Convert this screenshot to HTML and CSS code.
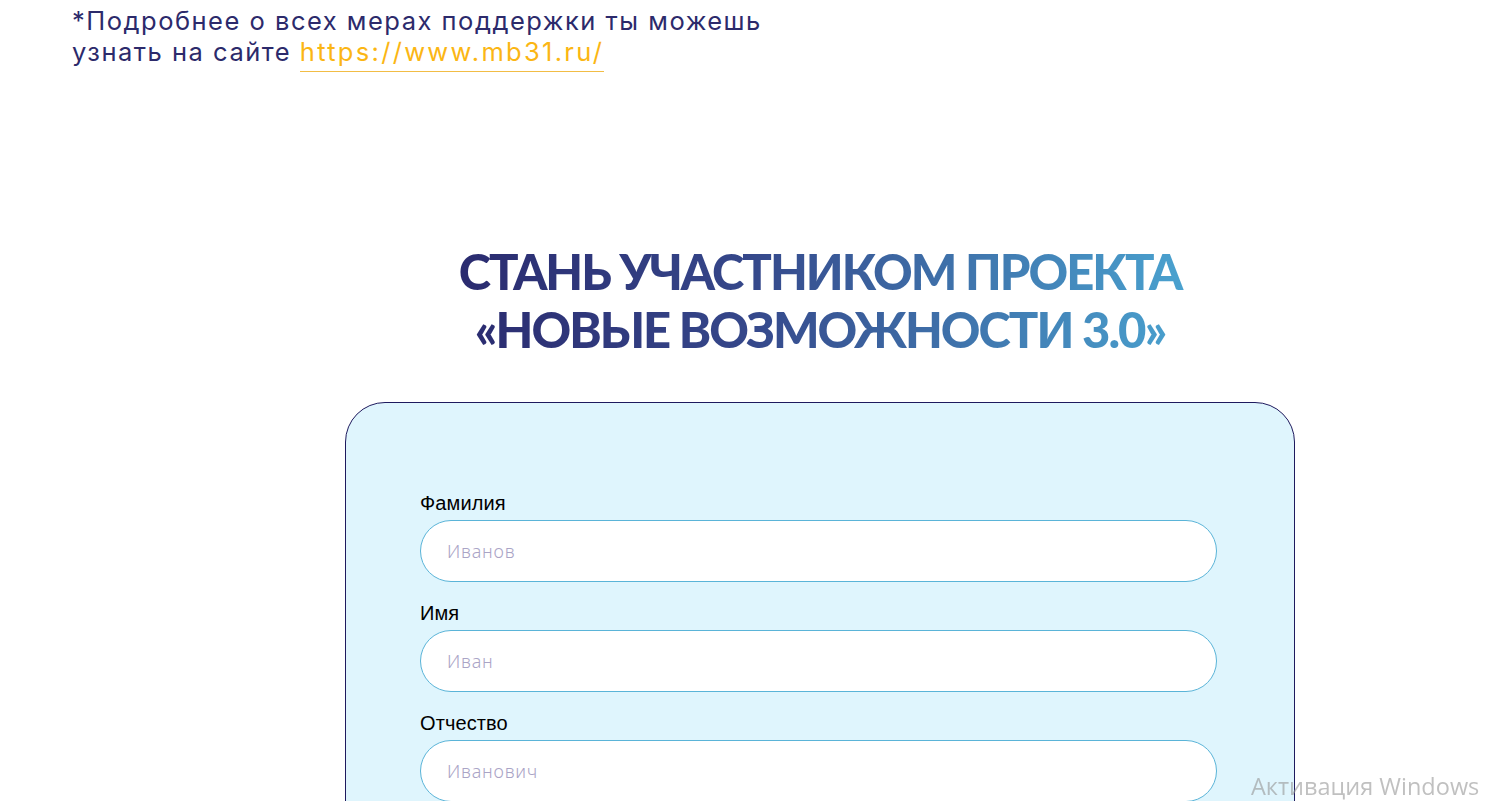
FILE: index.html
```html
<!DOCTYPE html>
<html lang="ru">
<head>
<meta charset="utf-8">
<title>Новые возможности 3.0</title>
<link rel="stylesheet" href="styles.css">
</head>
<body>
<div class="page">
  <p class="note">*Подробнее о всех мерах поддержки ты можешь<br>узнать на сайте <a class="note-link" href="#">https://www.mb31.ru/</a></p>

  <section class="join">
    <h2 class="join-title">СТАНЬ УЧАСТНИКОМ ПРОЕКТА<br>«НОВЫЕ ВОЗМОЖНОСТИ 3.0»</h2>
    <form class="card">
      <label class="field">
        <span class="field-label">Фамилия</span>
        <input class="field-input" type="text" placeholder="Иванов">
      </label>
      <label class="field">
        <span class="field-label">Имя</span>
        <input class="field-input" type="text" placeholder="Иван">
      </label>
      <label class="field">
        <span class="field-label">Отчество</span>
        <input class="field-input" type="text" placeholder="Иванович">
      </label>
    </form>
  </section>
</div>
<div class="watermark">Активация Windows</div>
</body>
</html>
```

FILE: styles.css
```css
* { box-sizing: border-box; }

html, body {
  margin: 0;
  padding: 0;
  background: #ffffff;
  overflow: hidden;
}

.page {
  width: 1490px;
  height: 801px;
  font-family: Lato, "Noto Sans", sans-serif;
}

.note {
  margin: 0;
  padding: 5px 0 0 72px;
  font-family: Inter, "Noto Sans", sans-serif;
  font-size: 25.5px;
  line-height: 31px;
  font-weight: 400;
  color: #2c2a6b;
  letter-spacing: 1.5px;
}

.note-link {
  color: #fbb614;
  text-decoration: none;
  letter-spacing: 2.3px;
  border-bottom: 1px solid #f2bd45;
  padding-bottom: 4px;
}

.join {
  display: flex;
  flex-direction: column;
  align-items: center;
  width: 950px;
  margin: 0 0 0 345px;
  padding-top: 175px;
}

.join-title {
  margin: 0;
  font-family: Lato, "Noto Sans", sans-serif;
  font-weight: 900;
  font-size: 49px;
  line-height: 58px;
  letter-spacing: -2px;
  text-align: center;
  background: linear-gradient(90deg, #2a2a6e 0%, #35478a 40%, #4aa3d0 100%);
  -webkit-background-clip: text;
  background-clip: text;
  color: transparent;
  padding: 0 10px;
}

.card {
  margin-top: 44px;
  width: 950px;
  height: 500px;
  border: 1px solid #1e1a5e;
  border-radius: 40px;
  background: #dff5fd;
  padding: 89px 77px 0 74px;
  display: flex;
  flex-direction: column;
  gap: 20px;
}

.field {
  display: flex;
  flex-direction: column;
  gap: 6px;
}

.field-label {
  font-family: "Liberation Sans", Arial, sans-serif;
  font-size: 20px;
  line-height: 22px;
  letter-spacing: 0.1px;
  color: #000;
}

.field-input {
  width: 797px;
  height: 62px;
  border: 1px solid #5ab4d8;
  border-radius: 31px;
  background: #fff;
  padding: 0 26px;
  font-family: "Noto Sans", Lato, sans-serif;
  font-weight: 300;
  font-size: 18px;
  letter-spacing: 0.8px;
  color: #2a2566;
  outline: none;
}

.field-input::placeholder {
  color: #aaa4c6;
}

.watermark {
  position: fixed;
  left: 1251px;
  top: 773px;
  font-family: "Open Sans", "Noto Sans", sans-serif;
  font-size: 23.5px;
  line-height: 26px;
  color: rgba(150, 150, 150, 0.6);
  pointer-events: none;
  white-space: nowrap;
}
```
